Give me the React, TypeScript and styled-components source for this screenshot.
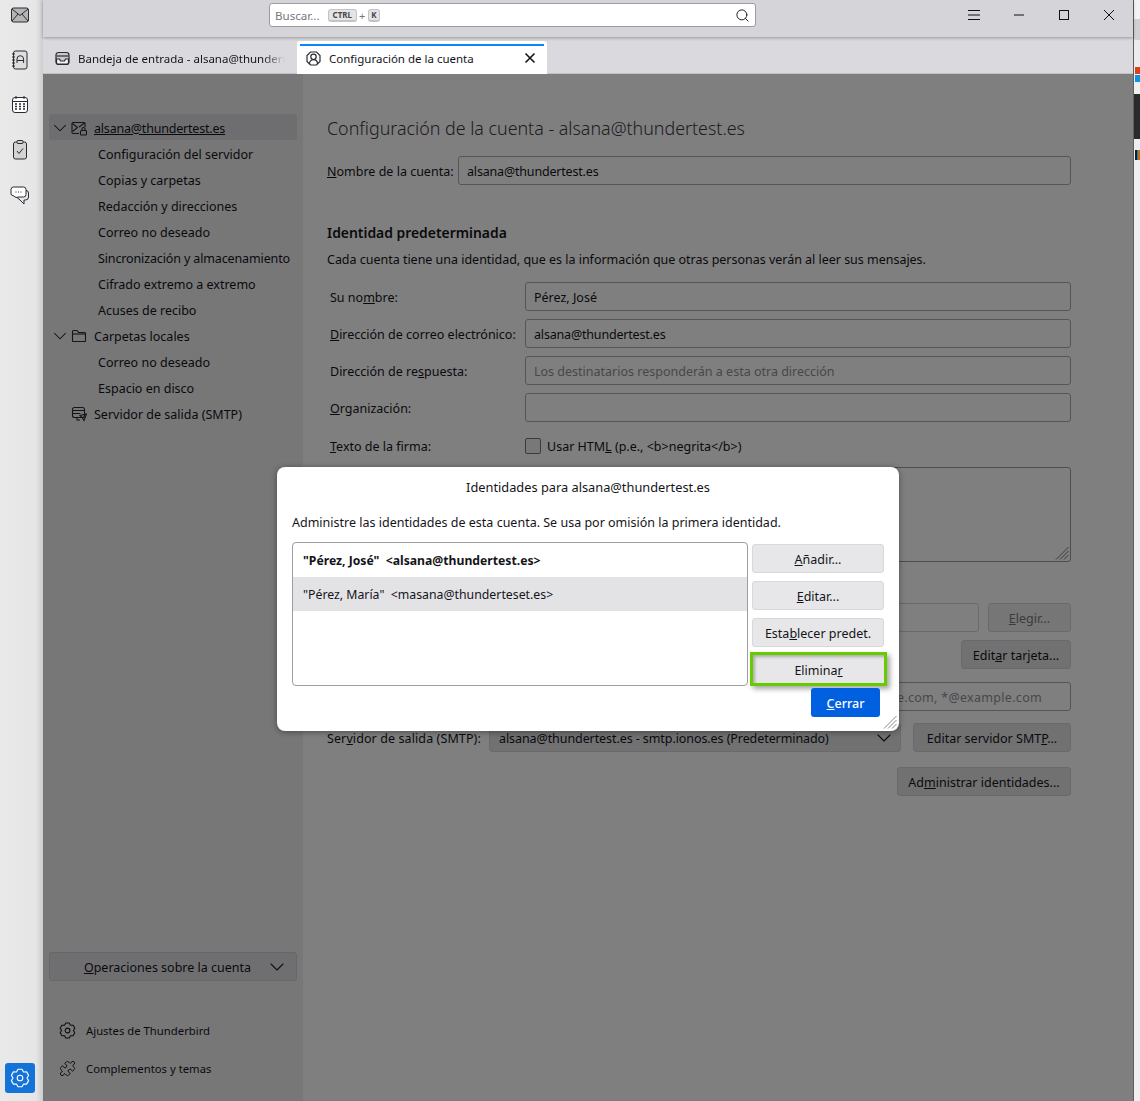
import React from "react";
import styled, { createGlobalStyle } from "styled-components";
import { ChevronDown, Search, Puzzle } from "lucide-react";

const Global = createGlobalStyle`
  html, body { margin: 0; padding: 0; background: #f0f0f0; overflow: hidden; }
  * { box-sizing: border-box; }
  body { font-family: "Noto Sans", "Open Sans", sans-serif; font-size: 12.5px; color: #15141a; }
`;

const Page = styled.div`
  position: relative; display: flex; width: 1140px; height: 1101px; overflow: hidden;
`;
const SpacesBar = styled.nav`
  width: 43px; flex: none; display: flex; flex-direction: column; align-items: center;
  padding: 5px 3px 8px 0; gap: 25px;
  background: linear-gradient(90deg, #e9e9e9 0, #e6e6e6 36px, #cccccc 43px);
`;
const SpaceIcon = styled.svg`
  width: 20px; height: 20px; flex: none; fill: none; stroke: #2b2a33; stroke-width: 1;
`;
const SettingsSpace = styled.div`
  margin-top: auto; width: 30px; height: 30px; border-radius: 3px;
  background: #1373d9; color: #fff; display: flex; align-items: center; justify-content: center;
`;
const GearSvg = styled.svg<{ $size: number; $weight: number }>`
  width: ${(p) => p.$size}px; height: ${(p) => p.$size}px; flex: none; fill: none; stroke: currentColor;
  stroke-width: ${(p) => p.$weight}; stroke-linejoin: round;
`;
const Window = styled.div`
  width: 1090px; flex: none; display: flex; flex-direction: column; position: relative;
`;
const TitleBar = styled.header`
  height: 37px; flex: none; display: flex; align-items: flex-start; background: #d4d4d9;
  box-shadow: 0 1px 3px rgba(0,0,0,.3); position: relative; z-index: 1;
`;
const SearchBox = styled.div`
  margin: 3px 0 0 226px; width: 487px; height: 24px; background: #fff; border: 1px solid #9b9ba0;
  border-radius: 3px; display: flex; align-items: center; padding: 0 5px; color: #77767c; gap: 8px; font-size: 11.6px;
`;
const Kbd = styled.kbd<{ $w: number }>`
  font: 700 8px "Noto Sans", sans-serif; color: #444; background: #e4e4e7; border: 1px solid #c3c3c7;
  border-bottom-width: 2px; border-radius: 3px; height: 13px; padding: 0 ${(p) => p.$w}px;
  display: inline-flex; align-items: center; justify-content: center;
`;
const Plus = styled.span`margin: 0 -5px 0 -6px; font-size: 11px;`;
const SearchIcon = styled.span`margin-left: auto; display: flex; color: #15141a;`;
const Controls = styled.div`margin-left: auto; padding-right: 2px; display: flex;`;
const Control = styled.div`
  width: 45px; height: 30px; display: flex; align-items: center; justify-content: center;
`;
const ControlIcon = styled.svg`width: 14px; height: 14px; fill: none; stroke: #111; stroke-width: 1;`;
const TabBar = styled.div`
  height: 37px; flex: none; display: flex; align-items: flex-end; background: #d9d9de;
  border-bottom: 1px solid #c0c0c4; font-size: 11.5px;
`;
const InactiveTab = styled.div`
  width: 254px; height: 32px; display: flex; align-items: center; padding: 2px 0 0 12px; gap: 8px;
`;
const TabText = styled.span`
  white-space: nowrap; overflow: hidden; width: 207px;
  -webkit-mask-image: linear-gradient(90deg, #000 185px, transparent 207px);
  mask-image: linear-gradient(90deg, #000 185px, transparent 207px);
`;
const ActiveTab = styled.div`
  width: 250px; height: 33px; position: relative; background: #fff; border-radius: 3px 3px 0 0;
  display: flex; align-items: center; padding: 1px 0 0 9px; gap: 8px; margin-bottom: -1px;
  &::before { content: ""; position: absolute; left: 3px; right: 3px; top: 3px; height: 2px; background: #0a84ff; }
`;
const TabIcon = styled.svg`width: 15px; height: 15px; flex: none; fill: none; stroke: #2b2a33; stroke-width: 1.2;`;
const TabClose = styled.svg`
  width: 12px; height: 12px; margin-left: auto; margin-right: 11px; fill: none; stroke: #15141a; stroke-width: 1.6;
`;
const Content = styled.div`
  flex: 1; display: flex; min-height: 0; position: relative;
  &::after { content: ""; position: absolute; inset: 0; background: rgba(0,0,0,.5); }
`;
const Sidebar = styled.aside`
  width: 260px; flex: none; background: #eeeef0; padding: 40px 6px 14px; display: flex; flex-direction: column;
`;
const TreeRow = styled.div<{ $selected?: boolean; $indent?: boolean }>`
  height: 26px; flex: none; display: flex; align-items: center; border-radius: 3px; padding-top: 2px;
  padding-left: ${(p) => (p.$indent ? "49px" : "5px")};
  background: ${(p) => (p.$selected ? "#dcdce0" : "transparent")};
`;
const TreeLong = styled.span`letter-spacing: -0.13px;`;
const TreeEmail = styled.u`letter-spacing: -0.2px;`;
const Twisty = styled.span<{ $hidden?: boolean }>`
  width: 13px; flex: none; display: flex; visibility: ${(p) => (p.$hidden ? "hidden" : "visible")};
  svg { flex: none; margin-left: -5px; }
`;
const TreeIcon = styled.svg`
  width: 16px; height: 16px; margin: 0 7px 0 4px; fill: none; stroke: #2b2a33; stroke-width: 1.1; flex: none;
`;
const SelectBar = styled.div`
  margin-top: auto; height: 29px; background: #dfdfe2; border: 1px solid #cfcfd4; border-radius: 3px; padding-top: 2px;
  position: relative; display: flex; align-items: center; justify-content: center; padding-right: 11px;
`;
const SelectChevron = styled.span`position: absolute; right: 7px; top: 2px; display: flex;`;
const LinkList = styled.div`margin-top: 30px; display: flex; flex-direction: column;`;
const LinkRow = styled.div`
  height: 38px; display: flex; align-items: center; padding-left: 10px; gap: 10px; font-size: 11.3px;
`;
const Main = styled.main`
  flex: 1; background: #fff; padding: 41px 62px 0 24px; display: flex; flex-direction: column; min-width: 0;
`;
const PageTitle = styled.h1`
  margin: 0; height: 27px; font-size: 17.85px; line-height: 26px; font-weight: 300; color: #3a3944;
`;
const AccountRow = styled.div`margin-top: 14px; display: flex; align-items: center;`;
const AccountLabel = styled.label`width: 131px; flex: none; padding-top: 2px;`;
const Field = styled.div<{ $muted?: boolean; $right?: boolean }>`
  height: 29px; border: 1px solid #aaaab0; border-radius: 3px; background: #fff; padding: 2px 8px 0;
  display: flex; align-items: center; white-space: nowrap; overflow: hidden; flex: 1; min-width: 0;
  color: ${(p) => (p.$muted ? "#8f8f96" : "inherit")};
  justify-content: ${(p) => (p.$right ? "flex-end" : "flex-start")};
  padding-right: ${(p) => (p.$right ? "28px" : "8px")};
  letter-spacing: ${(p) => (p.$right ? "0.3px" : "0")};
`;
const EmailValue = styled.span`letter-spacing: -0.18px;`;
const Heading = styled.h2`
  margin: 38px 0 0; height: 20px; line-height: 20px; font-size: 13.9px; font-weight: 600;
`;
const Description = styled.p`margin: 7px 0 0; height: 19px; line-height: 20px; letter-spacing: -0.02px;`;
const IdentityGrid = styled.div`
  margin-top: 13px; display: grid; grid-template-columns: 198px 1fr; row-gap: 8px; align-items: center;
`;
const RowLabel = styled.label`padding: 2px 0 0 3px;`;
const SignatureRow = styled.div`margin-top: 10px; height: 28px; display: flex; align-items: center;`;
const SignatureLabel = styled.label`width: 198px; padding-left: 3px; flex: none;`;
const Check = styled.span`
  width: 16px; height: 16px; border: 1px solid #77777c; border-radius: 2px; background: #f0f0f2; margin-right: 6px; flex: none;
`;
const TextArea = styled.div`
  margin: 7px 0 0 198px; height: 95px; border: 1px solid #9d9da3; border-radius: 3px; position: relative;
`;
const Grip = styled.svg`
  position: absolute; right: 1px; bottom: 1px; width: 14px; height: 14px; stroke: #777; stroke-width: 1; fill: none;
`;
const FileRow = styled.div`margin-top: 41px; display: flex; gap: 9px; align-items: center; padding-left: 198px;`;
const DisabledField = styled(Field)`border-color: #d4d4d8;`;
const EndRow = styled.div<{ $top: number }>`margin-top: ${(p) => p.$top}px; display: flex; justify-content: flex-end;`;
const FormButton = styled.div<{ $w: number; $disabled?: boolean }>`
  width: ${(p) => p.$w}px; height: 29px; flex: none; border-radius: 3px; border: 1px solid #d5d5d8; padding-top: 2px;
  background: ${(p) => (p.$disabled ? "#ececef" : "#e2e2e5")};
  color: ${(p) => (p.$disabled ? "#77777c" : "inherit")};
  display: flex; align-items: center; justify-content: center; white-space: nowrap;
`;
const InputRow = styled.div`margin-top: 13px; display: flex; padding-left: 198px;`;
const SmtpRow = styled.div`margin-top: 12px; display: flex; align-items: center;`;
const SmtpLabel = styled.label`width: 162px; flex: none; padding-top: 2px; letter-spacing: 0.1px;`;
const SmtpSelect = styled.div`
  width: 412px; height: 29px; flex: none; background: #e2e2e5; border: 1px solid #d5d5d8; border-radius: 3px; padding-top: 2px;
  display: flex; align-items: center; padding-left: 9px; margin-right: 12px; position: relative; white-space: nowrap;
  letter-spacing: -0.08px;
`;
const SmtpChevron = styled.span`position: absolute; right: 4px; top: 2px; display: flex;`;
const RightEdge = styled.div`
  width: 7px; flex: none; display: flex; flex-direction: column; background: #f0f0f0; border-left: 1px solid #5f5f5f;
`;
const Slice = styled.div<{ $h: number; $c: string; $inset?: boolean }>`
  height: ${(p) => p.$h}px; background: ${(p) => p.$c}; flex: none; margin-left: ${(p) => (p.$inset ? 1 : 0)}px;
`;
const Stripes = styled.div`
  height: 10px; flex: none; margin-left: 1px;
  background: linear-gradient(90deg, #1b1b1b 0 1.5px, #2a77b5 1.5px 2.5px, #f0f0f0 2.5px 3px, #b5761a 3px 5px);
`;
const Dialog = styled.section`
  position: absolute; left: 277px; top: 467px; width: 622px; height: 264px; z-index: 5; background: #fff;
  border-radius: 8px; padding: 10px 15px 0; box-shadow: 0 1px 6px rgba(0,0,0,.4);
`;
const DialogTitle = styled.h3`
  margin: 0; height: 20px; line-height: 20px; text-align: center; font-size: 12.8px; font-weight: 400;
`;
const DialogText = styled.p`margin: 16px 0 0; height: 19px; line-height: 20px;`;
const DialogBody = styled.div`margin-top: 10px; display: flex; height: 144px;`;
const IdentityList = styled.div`
  width: 456px; flex: none; border: 1px solid #9d9da3; border-radius: 4px; overflow: hidden;
`;
const IdentityRow = styled.div<{ $sel?: boolean; $bold?: boolean }>`
  height: 34px; line-height: 36px; padding-left: 10px; white-space: pre;
  background: ${(p) => (p.$sel ? "#e3e3e6" : "transparent")};
  font-weight: ${(p) => (p.$bold ? 700 : 400)};
  font-size: ${(p) => (p.$bold ? "12.2px" : "12.3px")};
`;
const Actions = styled.div`
  margin-left: 4px; width: 132px; padding-top: 2px; display: flex; flex-direction: column; gap: 8px;
`;
const DialogButton = styled.div<{ $marked?: boolean }>`
  height: ${(p) => (p.$marked ? 28 : 29)}px; background: #e7e7e9; padding-top: 2px;
  border-radius: ${(p) => (p.$marked ? 0 : 3)}px;
  display: flex; align-items: center; justify-content: center; white-space: nowrap;
  border: ${(p) => (p.$marked ? "0" : "1px solid #d8d8db")};
  margin-left: ${(p) => (p.$marked ? 1 : 0)}px;
  box-shadow: ${(p) => (p.$marked ? "inset 2px 2px 3px rgba(0,0,0,.25), 0 0 0 3px #66cc00, 3px 3px 5px 3px rgba(0,0,0,.35)" : "none")};
`;
const DialogFooter = styled.div`margin-top: 2px; display: flex; justify-content: flex-end; padding-right: 4px;`;
const PrimaryButton = styled.div`
  width: 69px; height: 29px; border-radius: 3px; background: #0060df; color: #fff; font-weight: 500; padding-top: 2px;
  display: flex; align-items: center; justify-content: center;
`;
const DialogGrip = styled.svg`
  position: absolute; right: 2px; bottom: 2px; width: 14px; height: 14px; stroke: #888; stroke-width: 1; fill: none;
`;

const GripLines = () => <path d="M13.5 1 1 13.5M13.5 5 5 13.5M13.5 9 9 13.5" />;

const gearPath = Array.from({ length: 6 }, (_, i) => {
  const a = i * 60 - 90;
  const pt = (deg: number, r: number) => {
    const t = (deg * Math.PI) / 180;
    return `${(10 + r * Math.cos(t)).toFixed(2)} ${(10 + r * Math.sin(t)).toFixed(2)}`;
  };
  return `${i === 0 ? "M" : "L"}${pt(a - 13, 9)}L${pt(a + 13, 9)}L${pt(a + 30, 7)}`;
}).join("") + "Z";

const Gear = ({ size, weight }: { size: number; weight: number }) => (
  <GearSvg $size={size} $weight={weight} viewBox="0 0 20 20">
    <path d={gearPath} />
    <circle cx="10" cy="10" r="2.8" />
  </GearSvg>
);

const SmallChevron = () => <ChevronDown size={24} strokeWidth={1.1} color="#1d1c22" />;
const TreeChevron = () => <ChevronDown size={22} strokeWidth={1.1} color="#1d1c22" />;
const AccountIcon = () => (
  <TreeIcon viewBox="0 0 16 16">
    <path d="M8 13.500H2A1 1 0 0 1 1 12.500V3.500A1 1 0 0 1 2 2.500h11A1 1 0 0 1 14 3.500V7" />
    <path d="m1.500 3.500 5 4-5 4M13.500 3 8 7" />
    <rect x="9.500" y="10.500" width="6" height="4.500" rx="1" />
    <path d="M11 10.500V9a1.500 1.500 0 0 1 3 0v1.500" />
  </TreeIcon>
);
const FolderIcon = () => (
  <TreeIcon viewBox="0 0 16 16">
    <path d="M1.500 13V3.500A1 1 0 0 1 2.500 2.500h3.500l1.500 2h6a1 1 0 0 1 1 1V13a.5.5 0 0 1-.5.5H2a.5.5 0 0 1-.5-.5Z" />
    <path d="M1.500 6h13" />
  </TreeIcon>
);
const SmtpIcon = () => (
  <TreeIcon viewBox="0 0 16 16">
    <rect x="1.500" y="1.500" width="12" height="10" rx="2" />
    <path d="M1.500 4.500h12M1.500 7.500h8M6 11.500v2.500h3" />
    <path d="m9 9.500 6.500-1.500-2.500 6.500-1.500-2.500Z" />
  </TreeIcon>
);

const treeSub1 = [
  "Configuración del servidor",
  "Copias y carpetas",
  "Redacción y direcciones",
  "Correo no deseado",
];
const treeSub2 = ["Cifrado extremo a extremo", "Acuses de recibo"];

export default function App() {
  return (
    <Page>
      <Global />
      <SpacesBar>
        <SpaceIcon viewBox="0 0 20 20">
          <rect x="1.500" y="3" width="17" height="14" rx="2" fill="#b5b5b5" />
          <path d="M2 4l8 6.500L18 4M2 16l6-7M18 16l-6-7" />
        </SpaceIcon>
        <SpaceIcon viewBox="0 0 20 20">
          <rect x="3.500" y="1" width="13.500" height="18" rx="2" fill="#dedede" />
          <path d="M2 4h3M2 7h3M2 10h3M2 13h3M2 16h3M7 13V9a3.300 3.300 0 0 1 6.600 0v4M7 10.500h6.600" />
        </SpaceIcon>
        <SpaceIcon viewBox="0 0 20 20">
          <rect x="2.500" y="2.500" width="15" height="15" rx="2.500" fill="#fff" />
          <path d="M2.500 6.500h15M6 1v3M14 1v3" />
          <path d="M5 9h2M9 9h2M13 9h2M5 11.500h2M9 11.500h2M13 11.500h2M5 14h2M9 14h2M13 14h2" strokeWidth="1.400" />
        </SpaceIcon>
        <SpaceIcon viewBox="0 0 20 20">
          <rect x="3.500" y="2" width="13" height="17" rx="2" fill="#d4d4d4" />
          <rect x="7" y="0.500" width="6" height="3" rx="1" fill="#d4d4d4" />
          <path d="m7 11 2 2.500 4-5" />
        </SpaceIcon>
        <SpaceIcon viewBox="0 0 20 20">
          <path d="M3.500 2h10A2.500 2.500 0 0 1 16 4.500v5a2.500 2.500 0 0 1-2.500 2.500H9l-3 .5-3-2A2 2 0 0 1 1 9V4.500A2.500 2.500 0 0 1 3.500 2Z" fill="#fff" />
          <path d="M16 5.500a2.500 2.500 0 0 1 2.500 2.500v4a3 3 0 0 1-3 3H14v4l-4-4-3-2.500" />
          <path d="M5.500 7h1M8 7h1M10.500 7h1" />
        </SpaceIcon>
        <SettingsSpace><Gear size={20} weight={1.1} /></SettingsSpace>
      </SpacesBar>
      <Window>
        <TitleBar>
          <SearchBox>
            <span>Buscar...</span>
            <Kbd $w={4}>CTRL</Kbd><Plus>+</Plus><Kbd $w={2}>K</Kbd>
            <SearchIcon><Search size={15} strokeWidth={1.5} /></SearchIcon>
          </SearchBox>
          <Controls>
            <Control><ControlIcon viewBox="0 0 14 14"><path d="M1 2.500h12M1 7h12M1 11.500h12" /></ControlIcon></Control>
            <Control><ControlIcon viewBox="0 0 14 14"><path d="M2 7h10" /></ControlIcon></Control>
            <Control><ControlIcon viewBox="0 0 14 14"><rect x="2.500" y="2.500" width="9" height="9" /></ControlIcon></Control>
            <Control><ControlIcon viewBox="0 0 14 14"><path d="m2 2 10 10M12 2 2 12" /></ControlIcon></Control>
          </Controls>
        </TitleBar>
        <TabBar>
          <InactiveTab>
            <TabIcon viewBox="0 0 15 15">
              <rect x="1" y="1.500" width="13" height="12" rx="2.500" fill="#c9c9cd" />
              <path d="M1.500 5h12" />
              <path d="M1.500 8h3l1 2h4l1-2h3V11.500a1.500 1.500 0 0 1-1.500 1.500H3a1.500 1.500 0 0 1-1.500-1.500Z" fill="#f2f2f4" />
            </TabIcon>
            <TabText>Bandeja de entrada - alsana@thundertest.es</TabText>
          </InactiveTab>
          <ActiveTab>
            <TabIcon viewBox="0 0 15 15">
              <path d="M4.500 1h6L14 4.500v6L10.500 14h-6L1 10.500v-6Z" />
              <circle cx="7.500" cy="5.800" r="2.700" />
              <path d="M3.500 13c0-2.800 1.500-4.300 4-4.300s4 1.500 4 4.300" />
            </TabIcon>
            <span>Configuración de la cuenta</span>
            <TabClose viewBox="0 0 12 12"><path d="m1.500 1.500 9 9M10.500 1.500l-9 9" /></TabClose>
          </ActiveTab>
        </TabBar>
        <Content>
          <Sidebar>
            <TreeRow $selected>
              <Twisty><TreeChevron /></Twisty><AccountIcon /><TreeEmail>alsana@thundertest.es</TreeEmail>
            </TreeRow>
            {treeSub1.map((t) => <TreeRow $indent key={t}>{t}</TreeRow>)}
            <TreeRow $indent><TreeLong>Sincronización y almacenamiento</TreeLong></TreeRow>
            {treeSub2.map((t) => <TreeRow $indent key={t}>{t}</TreeRow>)}
            <TreeRow>
              <Twisty><TreeChevron /></Twisty><FolderIcon />Carpetas locales
            </TreeRow>
            <TreeRow $indent>Correo no deseado</TreeRow>
            <TreeRow $indent>Espacio en disco</TreeRow>
            <TreeRow>
              <Twisty $hidden><TreeChevron /></Twisty><SmtpIcon />Servidor de salida (SMTP)
            </TreeRow>
            <SelectBar>
              <span><u>O</u>peraciones sobre la cuenta</span>
              <SelectChevron><SmallChevron /></SelectChevron>
            </SelectBar>
            <LinkList>
              <LinkRow><Gear size={17} weight={1.2} />Ajustes de Thunderbird</LinkRow>
              <LinkRow><Puzzle size={17} strokeWidth={1.3} />Complementos y temas</LinkRow>
            </LinkList>
          </Sidebar>
          <Main>
            <PageTitle>Configuración de la cuenta - alsana@thundertest.es</PageTitle>
            <AccountRow>
              <AccountLabel><u>N</u>ombre de la cuenta:</AccountLabel>
              <Field><EmailValue>alsana@thundertest.es</EmailValue></Field>
            </AccountRow>
            <Heading>Identidad predeterminada</Heading>
            <Description>Cada cuenta tiene una identidad, que es la información que otras personas verán al leer sus mensajes.</Description>
            <IdentityGrid>
              <RowLabel>Su no<u>m</u>bre:</RowLabel><Field>Pérez, José</Field>
              <RowLabel><u>D</u>irección de correo electrónico:</RowLabel><Field><EmailValue>alsana@thundertest.es</EmailValue></Field>
              <RowLabel>Dirección de re<u>s</u>puesta:</RowLabel><Field $muted>Los destinatarios responderán a esta otra dirección</Field>
              <RowLabel><u>O</u>rganización:</RowLabel><Field />
            </IdentityGrid>
            <SignatureRow>
              <SignatureLabel><u>T</u>exto de la firma:</SignatureLabel>
              <Check /><span>Usar HTM<u>L</u> (p.e., &lt;b&gt;negrita&lt;/b&gt;)</span>
            </SignatureRow>
            <TextArea><Grip viewBox="0 0 14 14"><GripLines /></Grip></TextArea>
            <FileRow>
              <DisabledField />
              <FormButton $w={83} $disabled><span><u>E</u>legir...</span></FormButton>
            </FileRow>
            <EndRow $top={8}>
              <FormButton $w={110}><span>Edit<u>a</u>r tarjeta...</span></FormButton>
            </EndRow>
            <InputRow>
              <Field $muted $right>ple.com, *@example.com</Field>
            </InputRow>
            <SmtpRow>
              <SmtpLabel>Ser<u>v</u>idor de salida (SMTP):</SmtpLabel>
              <SmtpSelect>
                alsana@thundertest.es - smtp.ionos.es (Predeterminado)
                <SmtpChevron><SmallChevron /></SmtpChevron>
              </SmtpSelect>
              <FormButton $w={158}><span>Editar servidor SMT<u>P</u>...</span></FormButton>
            </SmtpRow>
            <EndRow $top={15}>
              <FormButton $w={174}><span>Ad<u>m</u>inistrar identidades...</span></FormButton>
            </EndRow>
          </Main>
        </Content>
      </Window>
      <RightEdge>
        <Slice $h={19} $c="#f3f3f3" />
        <Slice $h={21} $c="#d0d0d0" />
        <Slice $h={27} $c="#ececec" />
        <Slice $h={7} $c="#d8431c" $inset />
        <Slice $h={1} $c="#f0f0f0" />
        <Slice $h={7} $c="#0f93dc" $inset />
        <Slice $h={12} $c="#f0f0f0" />
        <Slice $h={45} $c="#2a2a2a" />
        <Slice $h={11} $c="#eeeeee" />
        <Stripes />
      </RightEdge>
      <Dialog>
        <DialogTitle>Identidades para alsana@thundertest.es</DialogTitle>
        <DialogText>Administre las identidades de esta cuenta. Se usa por omisión la primera identidad.</DialogText>
        <DialogBody>
          <IdentityList>
            <IdentityRow $bold>{'"Pérez, José"  <alsana@thundertest.es>'}</IdentityRow>
            <IdentityRow $sel>{'"Pérez, María"  <masana@thunderteset.es>'}</IdentityRow>
          </IdentityList>
          <Actions>
            <DialogButton><span><u>A</u>ñadir...</span></DialogButton>
            <DialogButton><span><u>E</u>ditar...</span></DialogButton>
            <DialogButton><span>Esta<u>b</u>lecer predet.</span></DialogButton>
            <DialogButton $marked><span>Elimina<u>r</u></span></DialogButton>
          </Actions>
        </DialogBody>
        <DialogFooter>
          <PrimaryButton><span><u>C</u>errar</span></PrimaryButton>
        </DialogFooter>
        <DialogGrip viewBox="0 0 14 14"><GripLines /></DialogGrip>
      </Dialog>
    </Page>
  );
}
